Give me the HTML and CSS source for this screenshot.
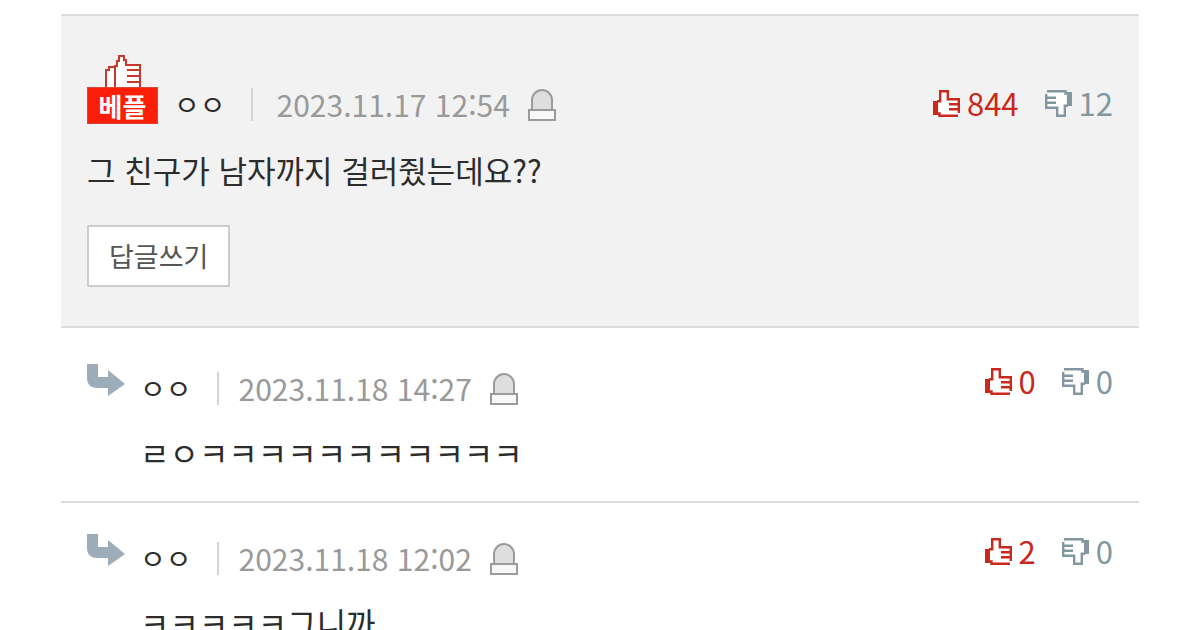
FILE: index.html
```
<!DOCTYPE html>
<html lang="ko">
<head>
  <meta charset="UTF-8">
  <meta name="viewport" content="width=device-width, initial-scale=1.0">
  <title>댓글</title>
  <link rel="stylesheet" href="styles.css">
</head>
<body>
  <svg class="defs" aria-hidden="true">
    <symbol id="thumb" viewBox="0 0 27 27">
      <path fill="#fff" d="M6 9h1V2h7v7h11v16H6z"/>
      <path fill="currentColor" d="M0 11h5v14H0z"/>
      <path fill="none" stroke="currentColor" stroke-width="2.4" d="M4 11.2h3.2V1.200h7.600v8h11V23M16 14.200h10M16 19.200h10M4 23.500h2.500v2.300H25"/>
    </symbol>
    <symbol id="siren" viewBox="0 0 28 33">
      <path fill="#dedede" stroke="#9b9b9b" stroke-width="2" d="M4 22V12a10 10 0 0 1 20 0v10z"/>
      <path fill="#f8f8f8" stroke="#9b9b9b" stroke-width="2" d="M1 22h26v10H1z"/>
    </symbol>
    <symbol id="arrow" viewBox="0 0 38 32">
      <path fill="#9cacb8" d="M0 0h11v13h10V6l17 14-17 12v-8H11Q0 24 0 14z"/>
    </symbol>
  </svg>

  <main class="comments">
    <article class="comment best">
      <header class="head">
        <div class="badge">
          <svg class="badge-thumb" viewBox="0 0 36 33" aria-hidden="true">
            <path fill="#fff" d="M2 14h8v-3h3V2h5v8h16v23H2z"/>
            <path fill="none" stroke="#c8372b" stroke-width="2" d="M10 33V12h2V7h2V2h5v4h2v5h14v22M22 16h12M22 22h12M22 28h12M9 13H4v3H1v17"/>
          </svg>
          <strong class="badge-label">베플</strong>
        </div>
        <span class="name">ㅇㅇ</span>
        <time class="date" datetime="2023-11-17T12:54">2023.11.17 12:54</time>
        <button class="report" type="button" aria-label="신고"><svg><use href="#siren"/></svg></button>
        <div class="votes">
          <button class="vote up" type="button" aria-label="추천 844"><svg><use href="#thumb"/></svg>844</button>
          <button class="vote down" type="button" aria-label="반대 12"><svg><use href="#thumb"/></svg>12</button>
        </div>
      </header>
      <p class="text">그 친구가 남자까지 걸러줬는데요??</p>
      <button class="write" type="button">답글쓰기</button>
    </article>

    <article class="comment reply">
      <svg class="arrow" aria-hidden="true"><use href="#arrow"/></svg>
      <div class="content">
        <header class="head">
          <span class="name">ㅇㅇ</span>
          <time class="date" datetime="2023-11-18T14:27">2023.11.18 14:27</time>
          <button class="report" type="button" aria-label="신고"><svg><use href="#siren"/></svg></button>
          <div class="votes">
            <button class="vote up" type="button" aria-label="추천 0"><svg><use href="#thumb"/></svg>0</button>
            <button class="vote down" type="button" aria-label="반대 0"><svg><use href="#thumb"/></svg>0</button>
          </div>
        </header>
        <p class="text">ㄹㅇㅋㅋㅋㅋㅋㅋㅋㅋㅋㅋㅋ</p>
      </div>
    </article>

    <article class="comment reply">
      <svg class="arrow" aria-hidden="true"><use href="#arrow"/></svg>
      <div class="content">
        <header class="head">
          <span class="name">ㅇㅇ</span>
          <time class="date" datetime="2023-11-18T12:02">2023.11.18 12:02</time>
          <button class="report" type="button" aria-label="신고"><svg><use href="#siren"/></svg></button>
          <div class="votes">
            <button class="vote up" type="button" aria-label="추천 2"><svg><use href="#thumb"/></svg>2</button>
            <button class="vote down" type="button" aria-label="반대 0"><svg><use href="#thumb"/></svg>0</button>
          </div>
        </header>
        <p class="text">ㅋㅋㅋㅋㅋ그니까</p>
      </div>
    </article>
  </main>
</body>
</html>
```
FILE: styles.css
```
* { box-sizing: border-box; }
body {
  margin: 0;
  background: #fff;
  color: #2c2c2c;
  font-family: "Noto Sans CJK KR", sans-serif;
  font-size: 31px;
  line-height: 40px;
}
button {
  padding: 0;
  border: 0;
  background: none;
  font: inherit;
  cursor: pointer;
}
.defs { display: none; }

.comments {
  margin: 14px 61px 0;
  border-top: 2px solid #dcdcdc;
}
.comment {
  padding: 31px 26px 29px;
  border-bottom: 2px solid #dcdcdc;
}
.best {
  padding: 38px 26px 39px;
  background: #f2f2f2;
}
.best + .reply { padding-top: 36px; }
.reply { display: flex; }
.content { flex: 1; }
.arrow {
  width: 38px;
  height: 32px;
  margin-right: 15px;
}

.head {
  display: flex;
  align-items: flex-end;
}
.badge {
  display: flex;
  flex-direction: column;
  align-items: center;
  margin-right: 16px;
}
.badge-thumb {
  width: 36px;
  height: 33px;
}
.badge-label {
  width: 71px;
  border: 1px solid #d8453a;
  background: #fb1e08;
  color: #fff;
  font-size: 26px;
  line-height: 35px;
  text-align: center;
}
.name {
  font-size: 28px;
}
.date {
  display: flex;
  color: #999;
  font-size: 30px;
}
.date::before {
  content: "";
  width: 2px;
  height: 33px;
  margin: 4px 20px 0 25px;
  background: #d4d4d4;
}
.best .date::before { margin-right: 24px; }
.report { margin-left: 18px; }
.report svg {
  display: block;
  width: 28px;
  height: 33px;
  margin-bottom: 3px;
}

.votes {
  display: flex;
  gap: 26px;
  margin: 0 0 10px auto;
}
.best .votes { margin-bottom: 4px; }
.vote {
  display: flex;
  align-items: center;
  gap: 7px;
  line-height: 34px;
}
.vote svg {
  width: 27px;
  height: 27px;
}
.up { color: #c9291c; }
.down { color: #82979f; }
.down svg { transform: rotate(180deg); }

.text {
  margin: 24px 0 0;
  font-size: 32px;
}
.best .text {
  margin: 26px 0 35px;
  font-size: 31px;
}
.write {
  padding: 9px 20px;
  border: 2px solid #ccc;
  background: #fff;
  color: #555;
  font-size: 27px;
}
```
